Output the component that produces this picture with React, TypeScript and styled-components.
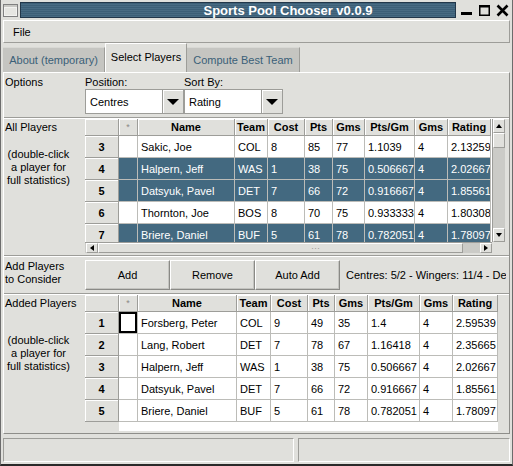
import React from 'react';
import styled, { createGlobalStyle, css } from 'styled-components';

const Colors = {
  face: '#e0e0dc',
  tab: '#c5c5c1',
  shadow: '#9d9d99',
  grid: '#bcbcb8',
  selected: '#436980',
  titleBlue: '#3f627a',
  tabText: '#3a5f78',
  trough: '#cbcbc7',
};

type Player = {
  num: number;
  name: string;
  team: string;
  cost: number;
  pts: number;
  gms: number;
  ppg: string;
  gms2: number;
  rating: string;
  selected?: boolean;
};

type Dir = 'up' | 'down' | 'left' | 'right';

const headers = ['', '*', 'Name', 'Team', 'Cost', 'Pts', 'Gms', 'Pts/Gm', 'Gms', 'Rating'];

const allPlayers: Player[] = [
  { num: 3, name: 'Sakic, Joe', team: 'COL', cost: 8, pts: 85, gms: 77, ppg: '1.1039', gms2: 4, rating: '2.13259' },
  { num: 4, name: 'Halpern, Jeff', team: 'WAS', cost: 1, pts: 38, gms: 75, ppg: '0.506667', gms2: 4, rating: '2.02667', selected: true },
  { num: 5, name: 'Datsyuk, Pavel', team: 'DET', cost: 7, pts: 66, gms: 72, ppg: '0.916667', gms2: 4, rating: '1.85561', selected: true },
  { num: 6, name: 'Thornton, Joe', team: 'BOS', cost: 8, pts: 70, gms: 75, ppg: '0.933333', gms2: 4, rating: '1.80308' },
  { num: 7, name: 'Briere, Daniel', team: 'BUF', cost: 5, pts: 61, gms: 78, ppg: '0.782051', gms2: 4, rating: '1.78097', selected: true },
];

const addedPlayers: Player[] = [
  { num: 1, name: 'Forsberg, Peter', team: 'COL', cost: 9, pts: 49, gms: 35, ppg: '1.4', gms2: 4, rating: '2.59539' },
  { num: 2, name: 'Lang, Robert', team: 'DET', cost: 7, pts: 78, gms: 67, ppg: '1.16418', gms2: 4, rating: '2.35665' },
  { num: 3, name: 'Halpern, Jeff', team: 'WAS', cost: 1, pts: 38, gms: 75, ppg: '0.506667', gms2: 4, rating: '2.02667' },
  { num: 4, name: 'Datsyuk, Pavel', team: 'DET', cost: 7, pts: 66, gms: 72, ppg: '0.916667', gms2: 4, rating: '1.85561' },
  { num: 5, name: 'Briere, Daniel', team: 'BUF', cost: 5, pts: 61, gms: 78, ppg: '0.782051', gms2: 4, rating: '1.78097' },
];

const topWidths = [34, 19, 97, 33, 37, 28, 32, 50, 33, 43];
const bottomWidths = [34, 19, 99, 34, 37, 27, 33, 52, 33, 45];

const WindowIcon = () => (
  <svg width="15" height="13" viewBox="0 0 15 13">
    <rect x="0.5" y="0.5" width="14" height="12" fill="#f2f2f0" stroke="#808080" />
    <rect x="1" y="1" width="13" height="2" fill="#c8c8c4" />
    <rect x="2" y="4" width="11" height="7" fill="#e6e6e2" />
  </svg>
);

const MinIcon = () => (
  <svg width="18" height="20" viewBox="0 0 18 20">
    <rect x="5" y="12" width="11" height="3" fill="#000" />
  </svg>
);

const MaxIcon = () => (
  <svg width="18" height="20" viewBox="0 0 18 20">
    <rect x="5.75" y="5.75" width="9.5" height="9.5" fill="none" stroke="#000" strokeWidth="1.5" />
    <rect x="5" y="5" width="11" height="2.5" fill="#000" />
  </svg>
);

const CloseIcon = () => (
  <svg width="18" height="20" viewBox="0 0 18 20">
    <path d="M5.5 5.5 L15.5 15.5 M15.5 5.5 L5.5 15.5" stroke="#000" strokeWidth="2.6" />
  </svg>
);

const Combo = ({ value }: { value: string }) => (
  <ComboBox>
    <ComboField>{value}</ComboField>
    <ComboButton />
  </ComboBox>
);

const PlayerGrid = ({ players, widths, focusFirst }: { players: Player[]; widths: number[]; focusFirst?: boolean }) => (
  <Grid $w={widths.reduce((a, b) => a + b, 0)}>
    <colgroup>
      {widths.map((w, i) => (
        <Col key={i} $w={w} />
      ))}
    </colgroup>
    <thead>
      <tr>
        {headers.map((h, i) =>
          i === 1 ? <StarHead key={i}>*</StarHead> : <HeadCell key={i}>{h}</HeadCell>
        )}
      </tr>
    </thead>
    <tbody>
      {players.map((p, r) => (
        <Row key={p.num} $selected={!!p.selected}>
          <RowHead>{p.num}</RowHead>
          <Cell $focus={!!focusFirst && r === 0} />
          <Cell>{p.name}</Cell>
          <Cell>{p.team}</Cell>
          <Cell>{p.cost}</Cell>
          <Cell>{p.pts}</Cell>
          <Cell>{p.gms}</Cell>
          <Cell>{p.ppg}</Cell>
          <Cell>{p.gms2}</Cell>
          <Cell>{p.rating}</Cell>
        </Row>
      ))}
    </tbody>
  </Grid>
);

const App = () => (
  <>
    <GlobalStyle />
    <Window>
      <TitleBar>
        <WindowIcon />
        <TitleBand>Sports Pool Chooser v0.0.9</TitleBand>
        <TitleButtons>
          <MinIcon />
          <MaxIcon />
          <CloseIcon />
        </TitleButtons>
      </TitleBar>

      <MenuBar>
        <MenuItem>File</MenuItem>
      </MenuBar>

      <TabStrip>
        <Tab $w={102}>About (temporary)</Tab>
        <Tab $w={82} $active>
          Select Players
        </Tab>
        <Tab $w={113}>Compute Best Team</Tab>
      </TabStrip>

      <Panel>
        <Section $h={44}>
          <SideLabel $top={3}>Options</SideLabel>
          <ComboRow>
            <ComboGroup>
              <ComboCaption>Position:</ComboCaption>
              <Combo value="Centres" />
            </ComboGroup>
            <ComboGroup>
              <ComboCaption>Sort By:</ComboCaption>
              <Combo value="Rating" />
            </ComboGroup>
          </ComboRow>
        </Section>
        <Separator />

        <Section $h={136}>
          <SideLabel $top={2}>
            <div>All Players</div>
            <Note $gap={14}>
              (double-click
              <br />
              a player for
              <br />
              full statistics)
            </Note>
          </SideLabel>
          <ScrollFrame>
            <Viewport>
              <PlayerGrid players={allPlayers} widths={topWidths} />
            </Viewport>
            <VScroll>
              <ArrowButton $dir="up" />
              <VThumb />
              <VTrough />
              <ArrowButton $dir="down" />
            </VScroll>
            <HScroll>
              <ArrowButton $dir="left" />
              <HThumb>
                <Grip>···</Grip>
              </HThumb>
              <HTrough />
              <ArrowButton $dir="right" />
            </HScroll>
            <Corner />
          </ScrollFrame>
        </Section>
        <Separator />

        <Section $h={36}>
          <SideLabel $top={3}>
            Add Players
            <br />
            to Consider
          </SideLabel>
          <ActionRow>
            <ActionButton>Add</ActionButton>
            <ActionButton>Remove</ActionButton>
            <ActionButton>Auto Add</ActionButton>
            <Summary>Centres: 5/2 - Wingers: 11/4 - De</Summary>
          </ActionRow>
        </Section>
        <Separator />

        <Section $grow>
          <SideLabel $top={2}>
            <div>Added Players</div>
            <Note $gap={24}>
              (double-click
              <br />
              a player for
              <br />
              full statistics)
            </Note>
          </SideLabel>
          <AddedViewport>
            <PlayerGrid players={addedPlayers} widths={bottomWidths} focusFirst />
          </AddedViewport>
        </Section>
      </Panel>

      <StatusBar>
        <StatusCell $w={291} />
        <StatusCell $grow />
      </StatusBar>
    </Window>
  </>
);

const GlobalStyle = createGlobalStyle`
  html, body {
    margin: 0;
    padding: 0;
    background: ${Colors.face};
  }
  body {
    font-family: 'Liberation Sans', Arial, sans-serif;
    font-size: 10.5px;
    color: #000;
  }
  * {
    box-sizing: border-box;
  }
`;

const Window = styled.div`
  width: 513px;
  height: 466px;
  display: flex;
  flex-flow: column;
  background: ${Colors.face};
  border-left: 1px solid #6c6c6c;
  border-right: 1px solid #6c6c6c;
  border-bottom: 2px solid #2a2a2a;
  padding: 0 2px 2px 2px;
  overflow: hidden;
`;

const TitleBar = styled.div`
  height: 20px;
  display: flex;
  align-items: center;
  flex-shrink: 0;
`;

const TitleBand = styled.div`
  flex: 1;
  height: 16px;
  margin-left: 2px;
  display: flex;
  align-items: center;
  justify-content: center;
  padding-left: 100px;
  color: #fff;
  font-weight: bold;
  font-size: 13px;
  border: 1px solid #22374a;
  background: repeating-linear-gradient(to bottom, #3c5f77 0, #3c5f77 1px, #486b83 1px, #486b83 2px);
`;

const TitleButtons = styled.div`
  display: flex;
  width: 54px;
`;

const MenuBar = styled.div`
  height: 23px;
  flex-shrink: 0;
  display: flex;
  align-items: center;
  border: 1px solid;
  border-color: #fff ${Colors.shadow} ${Colors.shadow} #fff;
`;

const MenuItem = styled.span`
  padding-left: 9px;
  font-size: 11px;
`;

const TabStrip = styled.div`
  height: 29px;
  flex-shrink: 0;
  display: flex;
  align-items: flex-end;
`;

const Tab = styled.div<{ $w: number; $active?: boolean }>`
  width: ${(p) => p.$w}px;
  height: 25px;
  display: flex;
  align-items: center;
  justify-content: center;
  background: ${Colors.tab};
  color: ${Colors.tabText};
  border-top: 1px solid #d8d8d4;
  border-right: 1px solid ${Colors.shadow};
  white-space: nowrap;
  font-size: 11px;
  ${(p) =>
    p.$active &&
    css`
      height: 29px;
      background: ${Colors.face};
      color: #000;
      border-top: 1px solid #fff;
      border-left: 1px solid #fff;
      padding-bottom: 2px;
    `}
`;

const Panel = styled.div`
  height: 362px;
  flex-shrink: 0;
  display: flex;
  flex-flow: column;
  border: 1px solid;
  border-color: #fff #8e8e8a #8e8e8a #fff;
`;

const Section = styled.div<{ $h?: number; $grow?: boolean }>`
  display: flex;
  padding: 0 3px 0 1px;
  flex-shrink: 0;
  overflow: hidden;
  ${(p) => (p.$grow ? 'flex: 1;' : `height: ${p.$h}px;`)}
`;

const SideLabel = styled.div<{ $top: number }>`
  width: 80px;
  flex-shrink: 0;
  padding-top: ${(p) => p.$top}px;
  line-height: 13px;
  white-space: nowrap;
  font-size: 11px;
`;

const Note = styled.div<{ $gap: number }>`
  width: max-content;
  margin-top: ${(p) => p.$gap}px;
  padding-left: 2px;
  text-align: center;
`;

const Separator = styled.div`
  height: 2px;
  flex-shrink: 0;
  border-top: 1px solid ${Colors.shadow};
  border-bottom: 1px solid #fff;
`;

const ComboRow = styled.div`
  display: flex;
  padding-top: 3px;
`;

const ComboGroup = styled.div`
  display: flex;
  flex-flow: column;
  width: 99px;
`;

const ComboCaption = styled.div`
  height: 13px;
  line-height: 13px;
  font-size: 11px;
`;

const ComboBox = styled.div`
  display: flex;
  height: 25px;
  border: 1px solid ${Colors.shadow};
`;

const ComboField = styled.div`
  flex: 1;
  display: flex;
  align-items: center;
  padding-left: 4px;
  background: #fff;
  font-size: 11px;
`;

const ComboButton = styled.div`
  width: 21px;
  display: flex;
  align-items: center;
  justify-content: center;
  background: ${Colors.face};
  border-left: 1px solid ${Colors.shadow};
  box-shadow: inset 1px 1px 0 #fff;

  &::after {
    content: '';
    border-left: 6px solid transparent;
    border-right: 6px solid transparent;
    border-top: 6px solid #000;
  }
`;

const ScrollFrame = styled.div`
  width: 420px;
  height: 134px;
  display: grid;
  grid-template-columns: 407px 13px;
  grid-template-rows: 123px 11px;
`;

const Viewport = styled.div`
  overflow: hidden;
  background: #fff;
`;

const AddedViewport = styled.div`
  width: 413px;
  height: 136px;
  overflow: hidden;
  background: linear-gradient(to right, ${Colors.face} 34px, #fff 34px);
`;

const Grid = styled.table<{ $w: number }>`
  width: ${(p) => p.$w}px;
  table-layout: fixed;
  border-collapse: separate;
  border-spacing: 0;
  font-size: 11px;
`;

const Col = styled.col<{ $w: number }>`
  width: ${(p) => p.$w}px;
`;

const HeadCell = styled.th`
  height: 17px;
  padding: 0 2px;
  background: ${Colors.face};
  font-weight: bold;
  text-align: center;
  white-space: nowrap;
  overflow: hidden;
  border-right: 1px solid ${Colors.shadow};
  border-bottom: 1px solid ${Colors.shadow};
  box-shadow: inset 1px 1px 0 #fff;
`;

const StarHead = styled(HeadCell)`
  font-weight: normal;
  color: #8a8a86;
  font-size: 9px;
`;

const Row = styled.tr<{ $selected: boolean }>`
  height: 22px;
  background: ${(p) => (p.$selected ? Colors.selected : '#fff')};
  color: ${(p) => (p.$selected ? '#fff' : '#000')};
`;

const RowHead = styled.td`
  background: ${Colors.face};
  color: #000;
  font-weight: bold;
  text-align: center;
  border-right: 1px solid ${Colors.shadow};
  border-bottom: 1px solid ${Colors.shadow};
  box-shadow: inset 1px 1px 0 #fff;
`;

const Cell = styled.td<{ $focus?: boolean }>`
  padding: 0 3px;
  white-space: nowrap;
  overflow: hidden;
  border-right: 1px solid ${Colors.grid};
  border-bottom: 1px solid ${Colors.grid};
  ${(p) => p.$focus && 'box-shadow: inset 0 0 0 2px #000;'}
`;

const triangle = (dir: Dir) => {
  switch (dir) {
    case 'up':
      return 'border-left: 3px solid transparent; border-right: 3px solid transparent; border-bottom: 4px solid #000;';
    case 'down':
      return 'border-left: 3px solid transparent; border-right: 3px solid transparent; border-top: 4px solid #000;';
    case 'left':
      return 'border-top: 3px solid transparent; border-bottom: 3px solid transparent; border-right: 4px solid #000;';
    default:
      return 'border-top: 3px solid transparent; border-bottom: 3px solid transparent; border-left: 4px solid #000;';
  }
};

const ArrowButton = styled.div<{ $dir: Dir }>`
  flex: 0 0 ${(p) => (p.$dir === 'up' || p.$dir === 'down' ? 14 : 12)}px;
  display: flex;
  align-items: center;
  justify-content: center;
  background: ${Colors.face};
  border: 1px solid;
  border-color: #fff ${Colors.shadow} ${Colors.shadow} #fff;

  &::after {
    content: '';
    width: 0;
    height: 0;
    ${(p) => triangle(p.$dir)}
  }
`;

const VScroll = styled.div`
  display: flex;
  flex-flow: column;
  background: ${Colors.trough};
  border-left: 1px solid ${Colors.shadow};
`;

const VThumb = styled.div`
  height: 15px;
  background: ${Colors.face};
  border: 1px solid;
  border-color: #fff ${Colors.shadow} ${Colors.shadow} #fff;
`;

const VTrough = styled.div`
  flex: 1;
`;

const HScroll = styled.div`
  display: flex;
  background: ${Colors.trough};
  padding-left: 1px;
  border-top: 1px solid ${Colors.shadow};
`;

const HThumb = styled.div`
  flex: 1;
  display: flex;
  align-items: center;
  justify-content: center;
  background: ${Colors.face};
  border: 1px solid;
  border-color: #fff ${Colors.shadow} ${Colors.shadow} #fff;
`;

const Grip = styled.span`
  color: #9a9a96;
  font-size: 9px;
  line-height: 7px;
  margin-left: 70px;
`;

const HTrough = styled.div`
  width: 17px;
`;

const Corner = styled.div`
  background: ${Colors.face};
`;

const ActionRow = styled.div`
  display: flex;
  align-items: center;
  padding-top: 3px;
  height: 33px;
  min-width: 0;
`;

const ActionButton = styled.div`
  width: 85px;
  height: 30px;
  flex-shrink: 0;
  display: flex;
  align-items: center;
  justify-content: center;
  background: ${Colors.face};
  border: 1px solid;
  border-color: #fff #8a8a86 #8a8a86 #fff;
  box-shadow: inset -1px -1px 0 #c4c4c0;
  font-size: 11px;
`;

const Summary = styled.div`
  margin-left: 6px;
  white-space: nowrap;
  overflow: hidden;
  font-size: 11px;
`;

const StatusBar = styled.div`
  display: flex;
  gap: 4px;
  margin-top: 4px;
  height: 24px;
  flex-shrink: 0;
`;

const StatusCell = styled.div<{ $w?: number; $grow?: boolean }>`
  ${(p) => (p.$grow ? 'flex: 1;' : `width: ${p.$w}px;`)}
  border: 1px solid;
  border-color: ${Colors.shadow} #fff #fff ${Colors.shadow};
`;

export default App;
